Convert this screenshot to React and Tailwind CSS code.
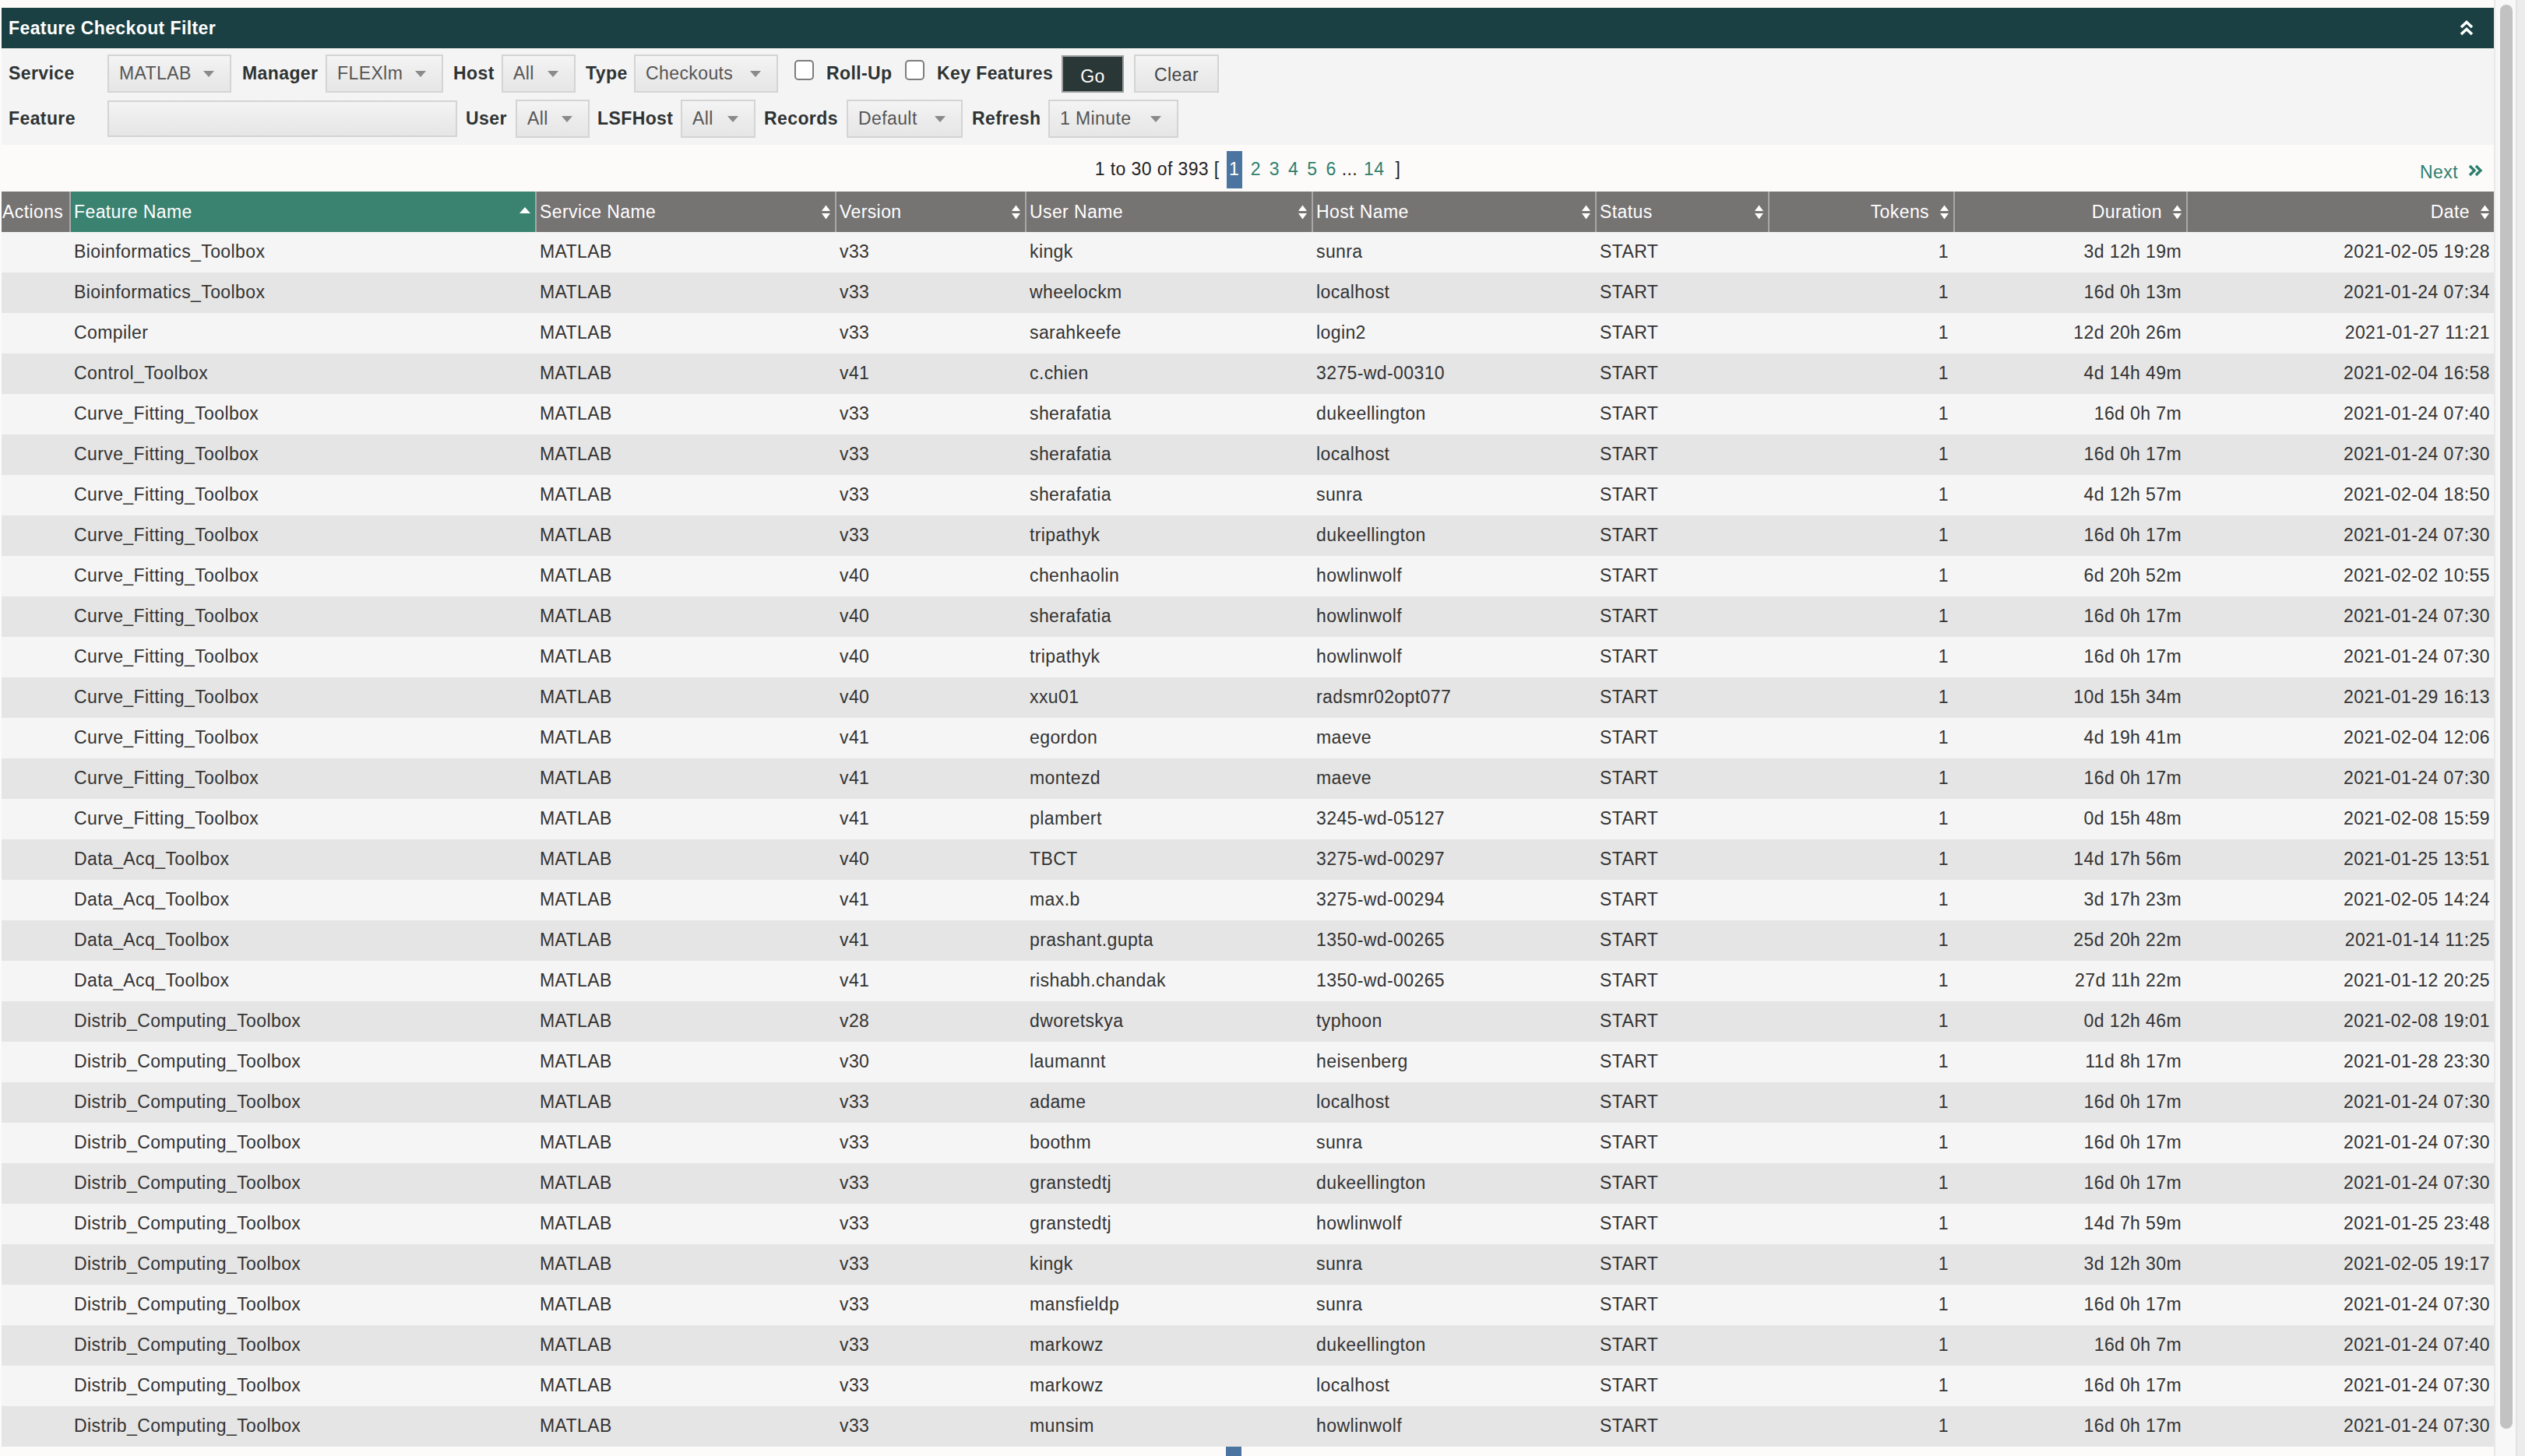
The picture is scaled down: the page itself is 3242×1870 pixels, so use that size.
import React from 'react';

const rows = [
  ['Bioinformatics_Toolbox', 'v33', 'kingk', 'sunra', '3d 12h 19m', '2021-02-05 19:28'],
  ['Bioinformatics_Toolbox', 'v33', 'wheelockm', 'localhost', '16d 0h 13m', '2021-01-24 07:34'],
  ['Compiler', 'v33', 'sarahkeefe', 'login2', '12d 20h 26m', '2021-01-27 11:21'],
  ['Control_Toolbox', 'v41', 'c.chien', '3275-wd-00310', '4d 14h 49m', '2021-02-04 16:58'],
  ['Curve_Fitting_Toolbox', 'v33', 'sherafatia', 'dukeellington', '16d 0h 7m', '2021-01-24 07:40'],
  ['Curve_Fitting_Toolbox', 'v33', 'sherafatia', 'localhost', '16d 0h 17m', '2021-01-24 07:30'],
  ['Curve_Fitting_Toolbox', 'v33', 'sherafatia', 'sunra', '4d 12h 57m', '2021-02-04 18:50'],
  ['Curve_Fitting_Toolbox', 'v33', 'tripathyk', 'dukeellington', '16d 0h 17m', '2021-01-24 07:30'],
  ['Curve_Fitting_Toolbox', 'v40', 'chenhaolin', 'howlinwolf', '6d 20h 52m', '2021-02-02 10:55'],
  ['Curve_Fitting_Toolbox', 'v40', 'sherafatia', 'howlinwolf', '16d 0h 17m', '2021-01-24 07:30'],
  ['Curve_Fitting_Toolbox', 'v40', 'tripathyk', 'howlinwolf', '16d 0h 17m', '2021-01-24 07:30'],
  ['Curve_Fitting_Toolbox', 'v40', 'xxu01', 'radsmr02opt077', '10d 15h 34m', '2021-01-29 16:13'],
  ['Curve_Fitting_Toolbox', 'v41', 'egordon', 'maeve', '4d 19h 41m', '2021-02-04 12:06'],
  ['Curve_Fitting_Toolbox', 'v41', 'montezd', 'maeve', '16d 0h 17m', '2021-01-24 07:30'],
  ['Curve_Fitting_Toolbox', 'v41', 'plambert', '3245-wd-05127', '0d 15h 48m', '2021-02-08 15:59'],
  ['Data_Acq_Toolbox', 'v40', 'TBCT', '3275-wd-00297', '14d 17h 56m', '2021-01-25 13:51'],
  ['Data_Acq_Toolbox', 'v41', 'max.b', '3275-wd-00294', '3d 17h 23m', '2021-02-05 14:24'],
  ['Data_Acq_Toolbox', 'v41', 'prashant.gupta', '1350-wd-00265', '25d 20h 22m', '2021-01-14 11:25'],
  ['Data_Acq_Toolbox', 'v41', 'rishabh.chandak', '1350-wd-00265', '27d 11h 22m', '2021-01-12 20:25'],
  ['Distrib_Computing_Toolbox', 'v28', 'dworetskya', 'typhoon', '0d 12h 46m', '2021-02-08 19:01'],
  ['Distrib_Computing_Toolbox', 'v30', 'laumannt', 'heisenberg', '11d 8h 17m', '2021-01-28 23:30'],
  ['Distrib_Computing_Toolbox', 'v33', 'adame', 'localhost', '16d 0h 17m', '2021-01-24 07:30'],
  ['Distrib_Computing_Toolbox', 'v33', 'boothm', 'sunra', '16d 0h 17m', '2021-01-24 07:30'],
  ['Distrib_Computing_Toolbox', 'v33', 'granstedtj', 'dukeellington', '16d 0h 17m', '2021-01-24 07:30'],
  ['Distrib_Computing_Toolbox', 'v33', 'granstedtj', 'howlinwolf', '14d 7h 59m', '2021-01-25 23:48'],
  ['Distrib_Computing_Toolbox', 'v33', 'kingk', 'sunra', '3d 12h 30m', '2021-02-05 19:17'],
  ['Distrib_Computing_Toolbox', 'v33', 'mansfieldp', 'sunra', '16d 0h 17m', '2021-01-24 07:30'],
  ['Distrib_Computing_Toolbox', 'v33', 'markowz', 'dukeellington', '16d 0h 7m', '2021-01-24 07:40'],
  ['Distrib_Computing_Toolbox', 'v33', 'markowz', 'localhost', '16d 0h 17m', '2021-01-24 07:30'],
  ['Distrib_Computing_Toolbox', 'v33', 'munsim', 'howlinwolf', '16d 0h 17m', '2021-01-24 07:30'],
];

const Caret = () => (
  <svg width="14" height="8" viewBox="0 0 14 8" className="shrink-0">
    <path d="M0 0 H14 L7 8 Z" fill="#8a8a8a" />
  </svg>
);

const SortBoth = () => (
  <svg width="11" height="19" viewBox="0 0 11 19" className="shrink-0">
    <path d="M5.5 0.5 L11 8 H0 Z" fill="white" />
    <path d="M5.5 18.5 L11 11 H0 Z" fill="white" />
  </svg>
);

const SortAsc = () => (
  <svg width="14" height="8" viewBox="0 0 14 8" className="shrink-0 mb-[4px]">
    <path d="M7 0 L14 8 H0 Z" fill="white" />
  </svg>
);

const Select = ({ value, className }) => (
  <div className={`flex h-[49px] items-center justify-between border-2 border-[#d4d4d4] bg-linear-to-b from-[#f4f4f4] via-[#ececec] to-[#e6e6e6] pl-[13px] pr-[20px] font-normal text-[#555555] ${className}`}>
    <span>{value}</span>
    <Caret />
  </div>
);

const Label = ({ children, className }) => (
  <span className={`shrink-0 font-bold text-[#2e3333] ${className}`}>{children}</span>
);

const Checkbox = () => (
  <span className="mb-[9px] h-[26px] w-[25px] shrink-0 rounded-[5px] border-2 border-[#7d7d7d] bg-white" />
);

const Pager = () => (
  <div className="grid h-[60px] grid-cols-[1fr_auto_1fr] pt-[8px]">
    <div />
    <div className="flex items-start gap-[11px] text-[#222222]">
      <span className="pt-[6px]">1 to 30 of 393 [</span>
      <span className="-ml-[2px] flex h-[48px] w-[20px] justify-center bg-[#4b74a1] pt-[6px] text-white">1</span>
      {['2', '3', '4', '5', '6'].map((n) => (
        <span key={n} className="pt-[6px] text-[#2e7f6e]">{n}</span>
      ))}
      <span className="-ml-[4px] pt-[6px]">...</span>
      <span className="-ml-[3px] pt-[6px] text-[#2e7f6e]">14</span>
      <span className="pl-[3px] pt-[6px]">]</span>
    </div>
    <div className="flex items-start justify-end pr-[14px] pt-[10px] text-[#2e7f6e]">
      <span>Next</span>
      <svg width="20" height="18" viewBox="0 0 20 18" className="ml-[12px] mt-[6px]">
        <path d="M3 3 L9 9 L3 15 M11 3 L17 9 L11 15" fill="none" stroke="#2e7f6e" strokeWidth="3.4" />
      </svg>
    </div>
  </div>
);

const HeadCell = ({ children, first, active, right, sort = 'both' }) => (
  <th
    className={`h-[52px] p-0 font-normal text-white ${first ? '' : 'border-l-2 border-[#a9a7a7]'} ${active ? 'bg-[#3a8371]' : 'bg-[#767373]'}`}
  >
    {first ? (
      <div className="flex h-full items-center px-[1px]">{children}</div>
    ) : right ? (
      <div className="flex h-full items-center justify-end gap-[14px] pr-[6px]">
        <span>{children}</span>
        <SortBoth />
      </div>
    ) : (
      <div className="flex h-full items-center justify-between pl-[4px] pr-[6px]">
        <span>{children}</span>
        {sort === 'asc' ? <SortAsc /> : <SortBoth />}
      </div>
    )}
  </th>
);

export default function App() {
  return (
    <div
      className="flex h-[1870px] w-[3242px] overflow-hidden bg-[#fdfbfa] text-[23px] tracking-[0.4px] text-[#333333]"
      style={{ fontFamily: '"Liberation Sans", Arial, Helvetica, sans-serif' }}
    >
      <div className="w-[3202px] shrink-0 pl-[2px] pt-[10px]">
        {/* title bar */}
        <div className="flex h-[52px] items-center justify-between bg-[#1b4043] pl-[9px] pr-[25px]">
          <span className="font-bold text-white">Feature Checkout Filter</span>
          <svg width="20" height="22" viewBox="0 0 20 22">
            <path d="M3 10 L10 3.5 L17 10 M3 19 L10 12.5 L17 19" fill="none" stroke="white" strokeWidth="3.6" />
          </svg>
        </div>

        {/* filter form */}
        <div className="flex flex-col gap-[9px] bg-[#f4f4f4] pb-[9px] pl-[9px] pt-[8px]">
          <div className="flex h-[49px] items-center">
            <Label className="w-[127px]">Service</Label>
            <Select value="MATLAB" className="w-[159px]" />
            <Label className="ml-[14px] w-[107px]">Manager</Label>
            <Select value="FLEXlm" className="w-[151px]" />
            <Label className="ml-[13px] w-[62px]">Host</Label>
            <Select value="All" className="w-[95px]" />
            <Label className="ml-[13px] w-[62px]">Type</Label>
            <Select value="Checkouts" className="w-[185px]" />
            <span className="ml-[21px] flex items-center">
              <Checkbox />
            </span>
            <Label className="ml-[16px] w-[101px]">Roll-Up</Label>
            <Checkbox />
            <Label className="ml-[16px] w-[160px]">Key Features</Label>
            <button className="h-[48px] w-[80px] border-2 border-[#9c9c9c] bg-[#2a3737] pt-[8px] text-white">Go</button>
            <button className="ml-[13px] h-[49px] w-[109px] border-2 border-[#d4d4d4] bg-linear-to-b from-[#f4f4f4] via-[#ececec] to-[#e6e6e6] pt-[4px] text-[#444444]">
              Clear
            </button>
          </div>
          <div className="flex h-[49px] items-center">
            <Label className="w-[127px]">Feature</Label>
            <div className="h-[47px] w-[449px] border-2 border-[#d4d4d4] bg-linear-to-b from-[#f4f4f4] via-[#ececec] to-[#e6e6e6]" />
            <Label className="ml-[11px] w-[64px]">User</Label>
            <Select value="All" className="w-[95px]" />
            <Label className="ml-[10px] w-[107px]">LSFHost</Label>
            <Select value="All" className="w-[96px]" />
            <Label className="ml-[11px] w-[106px]">Records</Label>
            <Select value="Default" className="w-[149px]" />
            <Label className="ml-[12px] w-[98px]">Refresh</Label>
            <Select value="1 Minute" className="w-[167px]" />
          </div>
        </div>

        <Pager />

        {/* results */}
        <table className="w-[3200px] table-fixed border-collapse">
          <colgroup>
            <col className="w-[88px]" />
            <col className="w-[598px]" />
            <col className="w-[385px]" />
            <col className="w-[244px]" />
            <col className="w-[368px]" />
            <col className="w-[364px]" />
            <col className="w-[222px]" />
            <col className="w-[238px]" />
            <col className="w-[299px]" />
            <col className="w-[394px]" />
          </colgroup>
          <thead>
            <tr>
              <HeadCell first>Actions</HeadCell>
              <HeadCell active sort="asc">Feature Name</HeadCell>
              <HeadCell>Service Name</HeadCell>
              <HeadCell>Version</HeadCell>
              <HeadCell>User Name</HeadCell>
              <HeadCell>Host Name</HeadCell>
              <HeadCell>Status</HeadCell>
              <HeadCell right>Tokens</HeadCell>
              <HeadCell right>Duration</HeadCell>
              <HeadCell right>Date</HeadCell>
            </tr>
          </thead>
          <tbody>
            {rows.map((r, i) => (
              <tr key={i} className={`h-[52px] ${i % 2 === 0 ? 'bg-[#f5f5f5]' : 'bg-[#e5e5e5]'}`}>
                <td className="p-0" />
                <td className="truncate pb-[2px] pl-[5px]">{r[0]}</td>
                <td className="pb-[2px] pl-[5px]">MATLAB</td>
                <td className="pb-[2px] pl-[5px]">{r[1]}</td>
                <td className="pb-[2px] pl-[5px]">{r[2]}</td>
                <td className="pb-[2px] pl-[5px]">{r[3]}</td>
                <td className="pb-[2px] pl-[5px]">START</td>
                <td className="pb-[2px] pr-[7px] text-right">1</td>
                <td className="pb-[2px] pr-[7px] text-right">{r[4]}</td>
                <td className="pb-[2px] pr-[5px] text-right">{r[5]}</td>
              </tr>
            ))}
          </tbody>
        </table>

        {/* bottom pager: only the top of its current-page highlight shows above the fold */}
        <div className="flex h-[60px] justify-center">
          <span className="mr-[36px] h-[48px] w-[20px] bg-[#4b74a1]" />
        </div>
      </div>

      {/* page scrollbar */}
      <div className="flex h-full w-[40px] shrink-0">
        <div className="w-[2px] bg-[#e8e8e8]" />
        <div className="w-[26px] bg-[#f8f8f8] pl-[6px] pt-[6px]">
          <div className="h-[1829px] w-[16px] rounded-full bg-[#c2c2c2]" />
        </div>
        <div className="w-[2px] bg-[#e3e3e3]" />
        <div className="w-[10px] bg-[#ececec]" />
      </div>
    </div>
  );
}
